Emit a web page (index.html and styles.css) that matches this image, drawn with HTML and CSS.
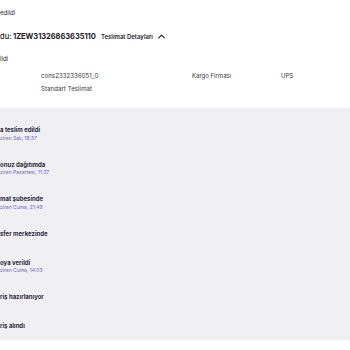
FILE: index.html
```html
<!DOCTYPE html>
<html lang="tr">
<head>
<meta charset="utf-8">
<link rel="stylesheet" href="styles.css">
</head>
<body>
<div class="page">
  <div class="head">
    <div class="status">edildi</div>
    <div class="code-row">
      <span class="code-label">du:</span>
      <span class="code">1ZEW31326863635110</span>
      <span class="details">Teslimat Detayları
        <svg class="chev" viewBox="0 0 10 6" width="7" height="5"><path d="M1 5 L5 1 L9 5" fill="none" stroke="#1c1c28" stroke-width="1.6" stroke-linecap="round" stroke-linejoin="round"/></svg>
      </span>
    </div>
    <div class="status2">ildi</div>
    <div class="ship">
      <div class="ship-row">
        <span class="ship-id">cons2332336051_0</span>
        <span class="ship-key">Kargo Firması</span>
        <span class="ship-val">UPS</span>
      </div>
      <div class="ship-row">
        <span class="ship-id">Standart Teslimat</span>
      </div>
    </div>
  </div>
  <div class="timeline">
    <div class="item"><div class="title">a teslim edildi</div><div class="date">ziran Salı, 18:37</div></div>
    <div class="item"><div class="title">onuz dağıtımda</div><div class="date">ziran Pazartesi, 11:37</div></div>
    <div class="item"><div class="title">mat şubesinde</div><div class="date">ziran Cuma, 21:49</div></div>
    <div class="item"><div class="title">sfer merkezinde</div></div>
    <div class="item"><div class="title">oya verildi</div><div class="date">ziran Cuma, 14:03</div></div>
    <div class="item"><div class="title">riş hazırlanıyor</div></div>
    <div class="item"><div class="title">riş alındı</div></div>
  </div>
</div>
</body>
</html>
```
FILE: styles.css
```css
html, body {
  margin: 0;
  padding: 0;
  background: #ffffff;
}
body {
  font-family: Inter, "Noto Sans", sans-serif;
  color: #1c1c28;
  width: 350px;
  overflow: hidden;
}
.page {
  display: flex;
  flex-direction: column;
}
.head {
  display: flex;
  flex-direction: column;
  padding-top: 9px;
}
.status {
  font-size: 6px;
  line-height: 8px;
  color: #2a2a35;
}
.code-row {
  margin-top: 15px;
  display: flex;
  align-items: center;
  height: 8px;
}
.code-label {
  font-size: 7.5px;
  font-weight: 500;
  width: 13px;
}
.code {
  font-size: 7.5px;
  font-weight: 700;
  letter-spacing: -0.05px;
  width: 88px;
}
.details {
  font-size: 6px;
  font-weight: 600;
  display: flex;
  align-items: center;
  gap: 5px;
}
.chev {
  display: block;
}
.status2 {
  margin-top: 15px;
  font-size: 6px;
  line-height: 8px;
}
.ship {
  display: flex;
  flex-direction: column;
  gap: 5px;
  margin-top: 9px;
  padding-left: 41px;
}
.ship-row {
  display: flex;
  font-size: 6px;
  line-height: 8px;
  color: #33333d;
}
.ship-id {
  width: 151px;
  letter-spacing: 0.1px;
}
.ship-key {
  width: 89px;
}
.timeline {
  margin-top: 15px;
  background: #f0f0f4;
  height: 232px;
  box-sizing: border-box;
  padding-top: 17px;
  display: flex;
  flex-direction: column;
  gap: 19px;
}
.item {
  display: flex;
  flex-direction: column;
}
.title {
  font-size: 6px;
  line-height: 10px;
  font-weight: 700;
  color: #2b2740;
}
.date {
  font-size: 5px;
  line-height: 5px;
  margin-top: 0.5px;
  color: #6a60d0;
}
```
